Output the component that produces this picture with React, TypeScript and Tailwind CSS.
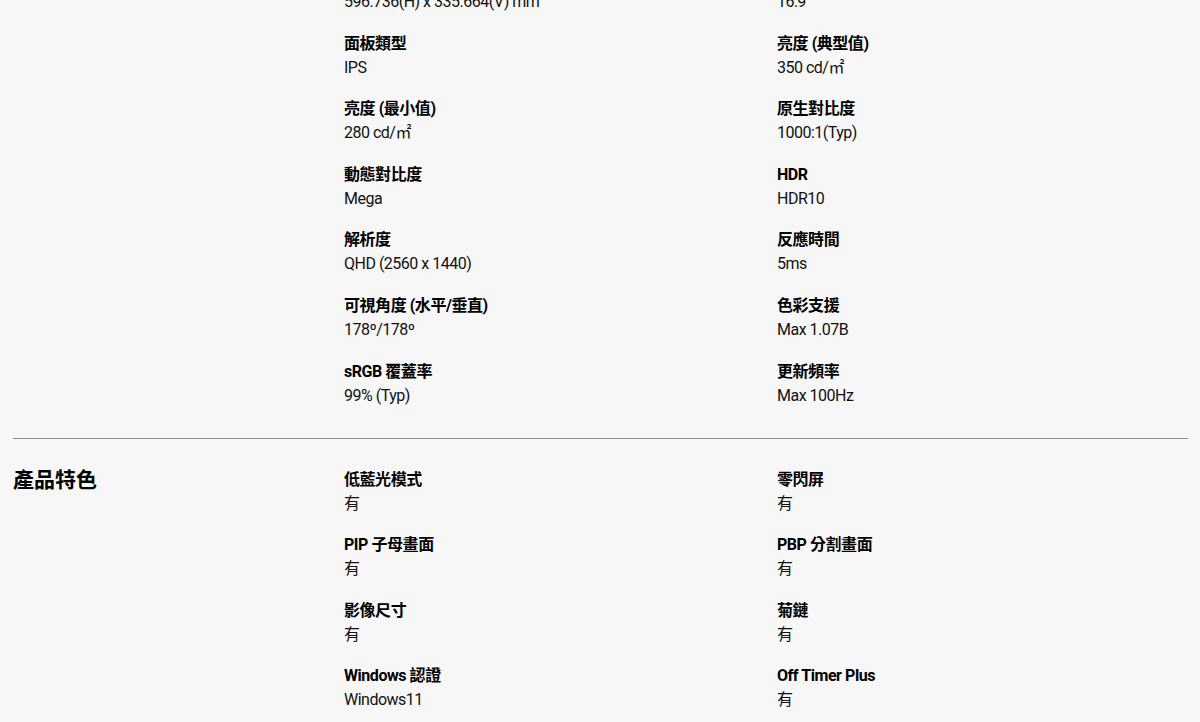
import React from "react";

type Spec = { label: string; value: string };

const displaySpecs: Spec[] = [
  { label: "有效顯示面積", value: "596.736(H) x 335.664(V) mm" },
  { label: "顯示比例", value: "16:9" },
  { label: "面板類型", value: "IPS" },
  { label: "亮度 (典型值)", value: "350 cd/㎡" },
  { label: "亮度 (最小值)", value: "280 cd/㎡" },
  { label: "原生對比度", value: "1000:1(Typ)" },
  { label: "動態對比度", value: "Mega" },
  { label: "HDR", value: "HDR10" },
  { label: "解析度", value: "QHD (2560 x 1440)" },
  { label: "反應時間", value: "5ms" },
  { label: "可視角度 (水平/垂直)", value: "178º/178º" },
  { label: "色彩支援", value: "Max 1.07B" },
  { label: "sRGB 覆蓋率", value: "99% (Typ)" },
  { label: "更新頻率", value: "Max 100Hz" },
];

const featureSpecs: Spec[] = [
  { label: "低藍光模式", value: "有" },
  { label: "零閃屏", value: "有" },
  { label: "PIP 子母畫面", value: "有" },
  { label: "PBP 分割畫面", value: "有" },
  { label: "影像尺寸", value: "有" },
  { label: "菊鏈", value: "有" },
  { label: "Windows 認證", value: "Windows11" },
  { label: "Off Timer Plus", value: "有" },
];

function SpecGrid({ items }: { items: Spec[] }) {
  return (
    <div className="grid grid-cols-[433px_1fr] gap-y-[17.6px]">
      {items.map((s) => (
        <div key={s.label}>
          <p className="text-[16px] font-bold leading-[24px] tracking-[-0.45px] text-black">{s.label}</p>
          <p className="text-[16px] leading-[24px] tracking-[-0.5px] text-[#111]">{s.value}</p>
        </div>
      ))}
    </div>
  );
}

export default function App() {
  return (
    <div
      className="min-h-[722px] overflow-hidden bg-[#f7f7f7] pl-[13px] pr-[12px]"
      style={{ fontFamily: "Roboto, 'Noto Sans CJK TC', sans-serif" }}
    >
      {/* display section, scrolled so its top is above the fold */}
      <section className="-mt-[34px] grid grid-cols-[331px_1fr] border-b border-[#8f8f8f] pb-[30px]">
        <div />
        <SpecGrid items={displaySpecs} />
      </section>

      <section className="grid grid-cols-[331px_1fr] pt-[29px] pb-10">
        <h2 className="text-[21px] font-bold leading-[24px] text-black">產品特色</h2>
        <SpecGrid items={featureSpecs} />
      </section>
    </div>
  );
}
